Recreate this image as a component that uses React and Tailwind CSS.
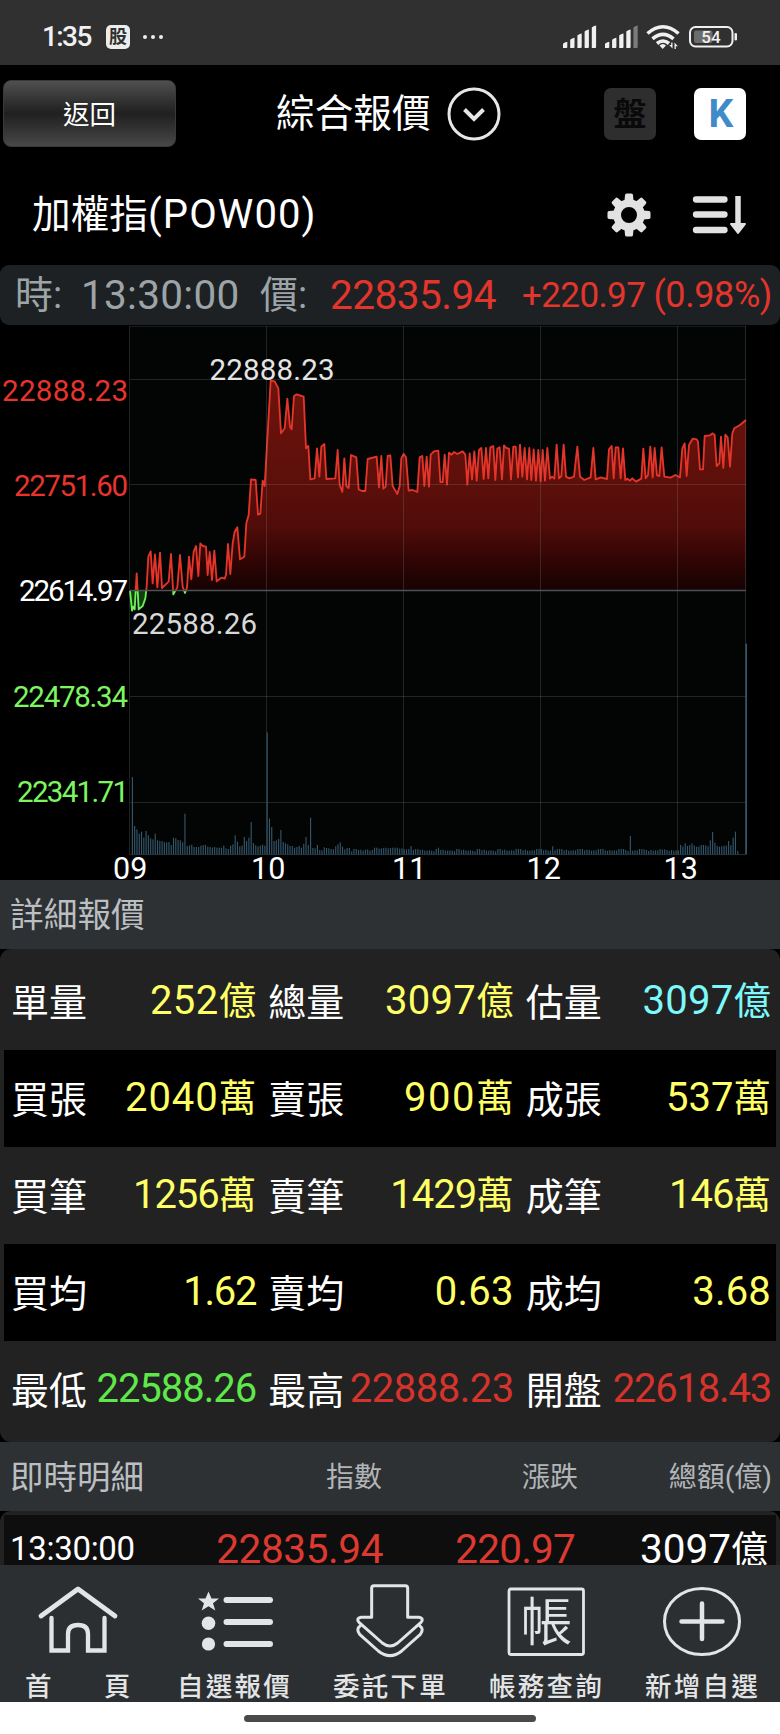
import React from 'react';

const PRICE_MORNING = [
  [90, 692], [96, 752], [100, 740], [104, 748], [110, 640], [116, 748], [128, 738], [136, 715], [140, 680], [145, 590],
  [152, 574], [158, 670], [165, 583], [172, 682], [180, 578], [186, 684], [206, 665], [213, 582], [220, 703], [232, 682],
  [240, 585], [248, 680], [255, 699], [261, 682], [267, 590], [274, 658], [281, 575], [288, 558], [295, 648], [301, 550],
  [308, 558], [318, 560], [323, 645], [329, 576], [336, 660], [343, 572], [350, 664], [364, 653], [374, 656], [378, 645],
  [384, 552], [391, 642], [398, 550], [404, 515], [412, 502], [420, 598], [433, 590], [439, 490], [446, 465], [453, 358],
  [467, 360], [474, 464], [481, 461], [488, 362], [494, 378], [512, 62], [524, 64], [535, 85], [543, 220], [554, 205],
  [562, 116], [570, 200], [575, 208], [582, 108], [590, 103], [611, 110], [618, 265], [625, 258], [631, 358], [644, 355],
  [651, 265], [658, 350], [664, 260], [673, 252], [679, 357], [706, 355], [713, 270], [719, 375], [727, 396], [733, 295],
  [739, 378], [746, 384], [753, 285], [769, 292], [776, 388], [786, 393], [796, 393], [803, 297], [830, 290], [837, 382],
  [844, 288], [850, 386], [857, 380], [863, 288], [871, 286], [878, 378], [892, 402], [899, 378], [904, 295], [911, 282],
  [918, 292], [926, 392], [938, 390], [952, 396], [959, 292], [967, 288], [973, 378], [980, 290], [987, 380],
];

const PRICE_MIDDAY = [
  [2, 284], [12, 274], [25, 272], [31, 366], [38, 366], [44, 284], [51, 374], [57, 278], [65, 284], [72, 276],
  [82, 282], [98, 274], [106, 284], [112, 374], [119, 280], [126, 358], [133, 274], [140, 362], [147, 270], [154, 264],
  [161, 357], [168, 264], [175, 355], [181, 262], [190, 258], [196, 360], [202, 266], [209, 262], [216, 358], [222, 256],
  [229, 264], [237, 266], [243, 358], [250, 260], [257, 260], [264, 352], [270, 254], [277, 350], [284, 264], [291, 358],
  [298, 264], [304, 360], [311, 268], [318, 362], [325, 270], [332, 364], [338, 270], [345, 362], [352, 264], [360, 356],
  [366, 350], [373, 356], [380, 254], [387, 355], [394, 348], [401, 254], [408, 350], [418, 355], [432, 350], [442, 260],
  [450, 350], [463, 360], [482, 352], [490, 264], [497, 358], [512, 352], [531, 357], [537, 268], [545, 258], [551, 355],
  [557, 262], [565, 262], [572, 355], [579, 265], [586, 360], [592, 356], [600, 362], [607, 355], [618, 365], [634, 356],
  [640, 266], [647, 355], [654, 345], [661, 260], [668, 352], [674, 264], [681, 346], [688, 348], [695, 262], [703, 350],
  [722, 353], [736, 345], [750, 352], [757, 265], [764, 250], [770, 348], [777, 255], [788, 236], [800, 238], [804, 245],
  [810, 328], [819, 328], [824, 228], [840, 226], [848, 220], [854, 225], [860, 318], [868, 310], [873, 230], [880, 324],
  [886, 224], [893, 232], [900, 320], [907, 220], [913, 205], [930, 195], [948, 180],
];

const PRICES = [...PRICE_MORNING, ...PRICE_MIDDAY.map(([x, y]) => [x + 990, y])];
const PRICE_LINE = 'M' + PRICES.map((p) => p.join(' ')).join('L');
const PRICE_AREA = PRICE_LINE + 'L1938 691L90 691Z';

const OPEN_VOLUME = [
  232, 85, 75, 62, 68, 50, 70, 57, 48, 45, 62, 42, 40, 40, 36, 36, 37, 28, 50, 48, 43, 42, 36, 122, 25, 27, 29, 22, 22, 22,
  26, 28, 28, 23, 22, 20, 22, 20, 20, 20, 26, 18, 16, 26, 30, 57, 38, 24, 26, 52, 40, 50, 97, 34, 27, 24, 26, 29, 26, 366,
  107, 82, 40, 42, 46, 73, 37, 33, 30, 25, 25, 20, 22, 25, 20, 31, 52, 28, 110, 19, 18, 28, 13, 12, 21, 19, 18, 16, 15, 24,
  30, 36, 23, 15, 19, 19,
];
const QUIET_VOLUME = [13, 14, 13, 14, 12, 13, 15, 15, 11, 10, 17, 12, 12, 14, 17, 17, 15, 12, 12, 17, 17, 16, 13];
const VOLUME_PEAKS = {
  110: 19, 111: 20, 112: 18, 113: 19, 114: 20, 122: 25, 134: 20, 184: 24, 218: 55, 242: 33, 245: 33, 253: 42, 254: 67, 255: 35,
  261: 40, 262: 27, 263: 50, 264: 68, 265: 10, 266: 0, 267: 0, 268: 0, 269: 632,
};
const VOLUME = Array.from({ length: 270 }, (_, i) => {
  if (i in VOLUME_PEAKS) return VOLUME_PEAKS[i];
  if (i < OPEN_VOLUME.length) return OPEN_VOLUME[i];
  if (i > 239) return QUIET_VOLUME[i % 23] + 11;
  return QUIET_VOLUME[(i * 5 + (i >> 3)) % 23] + (i > 104 && i < 124 ? 3 : -1);
});

const SCALE = [
  ['22888.23', 2, 401, 126, '#e8342c'],
  ['22751.60', 14, 496, 114, '#e8342c'],
  ['22614.97', 19, 601, 109, '#ffffff'],
  ['22478.34', 13, 707, 115, '#7df562'],
  ['22341.71', 17, 802, 112, '#7df562'],
];
const HOURS = [['09', 113], ['10', 251], ['11', 392], ['12', 526.5], ['13', 663.5]];

function Chart() {
  return (
    <svg className="block overflow-visible" width="780" height="555" viewBox="0 325 780 555">
      <defs>
        <linearGradient id="fall" gradientUnits="userSpaceOnUse" x1="0" y1="62" x2="0" y2="692">
          <stop offset="0" stopColor="#6e130d" />
          <stop offset="0.5" stopColor="#5c0f0a" />
          <stop offset="0.7" stopColor="#4f0c09" />
          <stop offset="0.86" stopColor="#300504" />
          <stop offset="1" stopColor="#160203" />
        </linearGradient>
        <clipPath id="above"><rect x="0" y="0" width="2100" height="692" /></clipPath>
        <clipPath id="below"><rect x="0" y="692" width="2100" height="200" /></clipPath>
      </defs>
      <rect x="130" y="326" width="616.5" height="529" fill="#030504" />
      <g transform="translate(100 360) scale(0.33333)" strokeLinejoin="round">
        <g clipPath="url(#above)">
          <path d={PRICE_AREA} fill="url(#fall)" />
          <path d={PRICE_LINE} fill="none" stroke="#e5352a" strokeWidth="5.5" />
        </g>
        <g clipPath="url(#below)">
          <path d={PRICE_AREA} fill="#123f0c" />
          <path d={PRICE_LINE} fill="none" stroke="#6df05a" strokeWidth="5.5" />
        </g>
      </g>
      <g stroke="#8f9a98" strokeOpacity="0.22" strokeWidth="1">
        {[130, 267, 404, 541, 678, 746].map((x) => <path key={x} d={`M${x - 0.5} 326V855`} />)}
        {[379.5, 484.5, 696.5, 802.5].map((y) => <path key={y} d={`M130 ${y}H746`} />)}
        <path d="M130 326.5H746" strokeOpacity="0.15" />
      </g>
      <path d="M130 590.5H746" stroke="#4c5255" strokeWidth="1.5" />
      <path d="M130 854.6H746" stroke="#273036" strokeWidth="1" />
      <g transform="translate(0 640) scale(0.33333)" fill="#34566b">
        {VOLUME.map((h, i) => (
          <rect key={i} x={i === 269 ? 2236 : 395.5 + 6.853 * i} y={643 - h} width={i === 269 ? 5 : 3.4} height={h} />
        ))}
      </g>
      <g fontSize="29.5" fontFamily="Roboto, sans-serif">
        {SCALE.map(([t, x, y, w, c]) => (
          <text key={t} x={x} y={y} textLength={w} fill={c}>{t}</text>
        ))}
        <text x="209.500" y="380" textLength="125" fill="#e4e4e4">22888.23</text>
        <text x="132" y="634" textLength="125" fill="#d8d8d8">22588.26</text>
        {HOURS.map(([t, x]) => (
          <text key={t} x={x} y="879" fontSize="30.5" fill="#ffffff">{t}</text>
        ))}
      </g>
    </svg>
  );
}

function StatusBar() {
  return (
    <div className="flex h-[65px] bg-[#303030] text-[#f0f0f0]">
      <div className="flex h-full items-center pt-[9px] pl-[42px]">
        <span className="w-[64px] text-[28px] leading-none font-medium tracking-[-1.6px]">1:35</span>
        <span className="flex h-6 w-6 items-center justify-center rounded-[5px] bg-[#ececec] text-[18px] leading-none font-bold text-[#303030]">股</span>
        <span className="ml-[13px] flex gap-1">
          <i className="h-1 w-1 rounded-full bg-[#ececec]" />
          <i className="h-1 w-1 rounded-full bg-[#ececec]" />
          <i className="h-1 w-1 rounded-full bg-[#ececec]" />
        </span>
      </div>
      <svg className="ml-auto mr-[40px] mt-[20px]" width="180" height="34" viewBox="560 20 180 34" fill="#f0f0f0">
        {[0, 1, 2, 3, 4].map((i) => (
          <path key={i} d={`M${563 + i * 7.2} 48V${44 - i * 4.1}q0 -1 4.3 -2.2V47q0 1 -1 1z`} />
        ))}
        {[0, 1, 2, 3, 4].map((i) => (
          <path key={i} d={`M${605 + i * 7.1} 48V${44 - i * 4.1}q0 -1 4.3 -2.2V47q0 1 -1 1z`} fill={i === 4 ? '#7b7b7b' : '#f0f0f0'} />
        ))}
        <g fill="none" stroke="#f0f0f0" strokeWidth="3.6">
          <path d="M647.500 33.5q15.500 -13.5 31 0" />
          <path d="M652.5 38.8q10.500 -9 21 0" />
          <path d="M657 43.500q6 -5 12 0" />
        </g>
        <path d="M659.500 45.500q3.500 -3 6.500 0l-3.300 3.500z" />
        <path d="M672.500 42.500v6l-3.300 -3.500h2v-2.500zM674.500 49v-6.500l3.300 3.800h-2v2.700z" />
        <rect x="690" y="27" width="42.5" height="19.500" rx="5.500" fill="none" stroke="#f0f0f0" strokeWidth="2" />
        <rect x="694" y="30.500" width="18.500" height="12.500" rx="2" fill="#6c6c6c" />
        <rect x="734.500" y="33" width="2.500" height="7.500" rx="1.2" />
        <text x="711" y="43" fontSize="17" fontWeight="500" textAnchor="middle">54</text>
      </svg>
    </div>
  );
}

function GearIcon() {
  return (
    <svg width="44" height="44" viewBox="-22 -22 44 44" fill="#e2e2e2">
      {[0, 45, 90, 135, 180, 225, 270, 315].map((a) => (
        <path key={a} transform={`rotate(${a})`} d="M-4.800 -11L-4 -20Q-3.800 -21.500 -2.300 -21.500H2.300Q3.800 -21.500 4 -20L4.800 -11Z" />
      ))}
      <circle r="11.900" fill="none" stroke="#e2e2e2" strokeWidth="7.800" />
    </svg>
  );
}

const CELLS = [
  [['單量', '252', '億', 'tracking-[0.5px] text-[#ffff66]'], ['總量', '3097', '億', 'tracking-[0.3px] text-[#ffff66]'], ['估量', '3097', '億', 'tracking-[0.3px] text-[#7df9fb]']],
  [['買張', '2040', '萬', 'tracking-[1px] text-[#ffff66]'], ['賣張', '900', '萬', 'tracking-[1.6px] text-[#ffff66]'], ['成張', '537', '萬', 'text-[#ffff66]']],
  [['買筆', '1256', '萬', 'tracking-[-1px] text-[#ffff66]'], ['賣筆', '1429', '萬', 'tracking-[-1px] text-[#ffff66]'], ['成筆', '146', '萬', 'tracking-[-1px] text-[#ffff66]']],
  [['買均', '1.62', '', 'tracking-[-1.2px] text-[#ffff66]'], ['賣均', '0.63', '', 'tracking-[0.2px] text-[#ffff66]'], ['成均', '3.68', '', 'tracking-[0.2px] text-[#ffff66]']],
  [['最低', '22588.26', '', 'tracking-[-1px] text-[#5fe84a]'], ['最高', '22888.23', '', 'tracking-[-0.5px] text-[#d5332b]'], ['開盤', '22618.43', '', 'tracking-[-1.2px] text-[#d5332b]']],
];

const NAV = [
  ['首　頁', 'home'], ['自選報價', 'list'], ['委託下單', 'order'], ['帳務查詢', 'account'], ['新增自選', 'add'],
];

function NavIcon({ name }) {
  const line = { fill: 'none', stroke: '#e3e4e5', strokeLinecap: 'round', strokeLinejoin: 'round' };
  return (
    <svg width="90" height="84" viewBox="-45 1579 90 84" fill="#e3e4e5">
      {name === 'home' && (
        <g {...line} strokeWidth="4.300">
          <path d="M-37 1616L0 1589L37 1616" strokeWidth="4.800" />
          <path d="M-26.500 1618V1650.500H-10V1634Q-10 1625 0 1625T10 1634V1650.500H26.500V1618" strokeLinejoin="miter" />
        </g>
      )}
      {name === 'list' && (
        <g>
          <path d="M-25.500 1591.500l3 7h7.500l-6 4.800l2.300 7.200l-6.800 -4.300l-6.800 4.300l2.300 -7.200l-6 -4.800h7.500z" />
          <circle cx="-25.500" cy="1623.300" r="6.800" />
          <circle cx="-25.500" cy="1644" r="6.600" />
          <path {...line} strokeWidth="6" d="M-7.500 1600H36M-7.500 1622H36M-7.500 1644H36" />
        </g>
      )}
      {name === 'order' && (
        <g {...line} strokeWidth="9" transform="translate(-45 1575) scale(0.33333)">
          <path d="M80 39Q80 32 87 32H181Q188 32 188 39V127H222Q238 130 228 142L158 204Q135 222 112 204L42 142Q32 130 48 127H80Z" />
          <path d="M46 152Q32 162 44 178L100 228Q135 256 170 228L226 178Q238 162 224 152" />
        </g>
      )}
      {name === 'account' && (
        <g>
          <rect {...line} strokeWidth="2.800" x="-37" y="1589" width="74.500" height="65.500" rx="2" />
          <text x="0.500" y="1641" fontSize="52" fontWeight="350" textAnchor="middle">帳</text>
        </g>
      )}
      {name === 'add' && (
        <g {...line}>
          <ellipse cx="0" cy="1621.500" rx="37.500" ry="33" strokeWidth="3" />
          <path strokeWidth="4.500" d="M-20.500 1621.500H20.500M0 1603.500V1639" />
        </g>
      )}
    </svg>
  );
}

export default function App() {
  return (
    <div className="h-[1734px] w-[780px] overflow-hidden bg-black font-['Roboto','Noto_Sans_CJK_TC',sans-serif] whitespace-nowrap text-white">
      <StatusBar />

      <header className="flex h-[96px] items-start pl-[3px]">
        <button className="mt-[15px] h-[67px] w-[173px] rounded-[8px] border border-[#3a3a3a] bg-linear-to-b from-[#505050] via-[#202020] to-[#484848] text-[26.5px] leading-[67px]">返回</button>
        <div className="mt-[20px] ml-[100px] flex h-[56px] items-center">
          <h1 className="pt-[2px] text-[38.7px] leading-[56px]">綜合報價</h1>
          <svg className="mt-[1px] ml-[15px]" width="56" height="56" viewBox="-28 -28 56 56" fill="none" stroke="#e6e6e6">
            <circle r="25" strokeWidth="3" />
            <path d="M-9.500 -4.500L0 5L9.500 -4.500" strokeWidth="4" />
          </svg>
        </div>
        <div className="mt-[23px] mr-[34px] ml-auto flex gap-[38px]">
          <div className="flex h-[52px] w-[52px] items-center justify-center rounded-[7px] bg-[#2e2e2e] text-[33px] leading-none font-bold text-[#0a0a0a]">盤</div>
          <div className="flex h-[52px] w-[52px] items-center justify-center rounded-[7px] bg-white pl-[2px] text-[39px] leading-none font-bold text-[#3f8bc9]">K</div>
        </div>
      </header>

      <div className="flex h-[104px] items-center pr-[33px] pl-[32px]">
        <h2 className="pt-[3px] text-[38.7px] leading-[60px]">加權指<span className="text-[40px] tracking-[1.1px]">(POW00)</span></h2>
        <div className="ml-auto flex items-center gap-[41px] pt-[3px]">
          <GearIcon />
          <svg width="55" height="44" viewBox="693 192 55 44" fill="none" stroke="#e2e2e2" strokeLinecap="round">
            <path strokeWidth="6.300" d="M697 198.500H725.500M697 213.500H725.500M697 229H725.500" />
            <path strokeWidth="5.500" strokeLinecap="butt" d="M739 195V226" />
            <path d="M732 223H746L739 232Z" fill="#e2e2e2" strokeWidth="2" strokeLinejoin="round" />
          </svg>
        </div>
      </div>

      <div className="flex h-[60px] items-center rounded-[9px] bg-[#1d2124] pr-[8px] pl-[15px] text-[40.5px] leading-[61px] text-[#9da4a7]">
        <span className="w-[66px] text-[38px]">時:</span>
        <span className="w-[179px] tracking-[0.3px]">13:30:00</span>
        <span className="w-[70px] text-[38px]">價:</span>
        <span className="w-[192px] tracking-[-0.5px] text-[#e3352c]">22835.94</span>
        <span className="w-[127px] text-[35px] tracking-[-0.6px] text-[#e3352c]">+220.97</span>
        <span className="ml-auto text-[36px] tracking-[-0.4px] text-[#e3352c]">(0.98%)</span>
      </div>

      <Chart />

      <h3 className="relative h-[69px] bg-[#2d3134] pl-[10px] text-[33.7px] leading-[71px] text-[#bbbfc1]">詳細報價</h3>

      <section className="flex h-[493px] flex-col rounded-[11px] bg-[#222222] p-1">
        {CELLS.map((row, r) => (
          <div key={r} className={`grid grid-cols-3 ${r % 2 ? 'h-[97px] bg-black' : 'h-[97px]'}`}>
            {row.map(([label, num, unit, tone]) => (
              <div key={label} className="flex items-center justify-between pr-[5px] pl-[7px] leading-[60px]">
                <span className="pt-[3px] text-[38px]">{label}</span>
                <span className={`flex items-baseline pb-[2px] text-[40px] ${tone}`}>
                  {num}
                  {unit && <span className="text-[37.5px] tracking-normal">{unit}</span>}
                </span>
              </div>
            ))}
          </div>
        ))}
      </section>

      <div className="flex h-[69px] items-center bg-[#2d3134] pr-[8px] pl-[10px] text-[28px] leading-[69px] text-[#b2b5b7]">
        <span className="w-[220px] pt-[2px] text-[33.5px] text-[#bbbfc1]">即時明細</span>
        <span className="w-[152px] pt-[2px] text-right">指數</span>
        <span className="w-[196px] pt-[2px] text-right">漲跌</span>
        <span className="ml-auto pt-[2px]">總額(億)</span>
      </div>

      <div className="h-[54px] overflow-hidden rounded-t-[11px] bg-[#222222] px-1 pt-1">
        <div className="flex h-[80px] bg-[#0e0e0e] pr-[8px] pl-[6px] text-[40.5px] leading-[68px]">
          <span className="w-[160px] text-[33px] tracking-[-0.3px]">13:30:00</span>
          <span className="w-[213px] text-right tracking-[-0.4px] text-[#dc3a30]">22835.94</span>
          <span className="w-[192px] text-right tracking-[-0.8px] text-[#dc3a30]">220.97</span>
          <span className="ml-auto flex items-baseline">3097<span className="text-[37px]">億</span></span>
        </div>
      </div>

      <nav className="grid h-[137px] grid-cols-5 bg-[#2b2f31] pt-[14px] text-[#e3e4e5]">
        {NAV.map(([label, icon]) => (
          <div key={icon} className="flex flex-col items-center">
            <NavIcon name={icon} />
            <span className={`h-[36px] text-[26.5px] leading-[48px] font-medium ${icon === 'home' ? 'w-[106px] flex justify-between' : 'tracking-[2.3px] -mr-[1px]'}`}>
              {icon === 'home' ? label.split('　').map((c) => <b key={c} className="w-[27px] font-medium">{c}</b>) : label}
            </span>
          </div>
        ))}
      </nav>

      <div className="relative flex h-[32px] justify-center bg-white pt-[13px]">
        <div className="h-[7px] w-[292px] rounded-full bg-[#4a4a4a]" />
      </div>
    </div>
  );
}
